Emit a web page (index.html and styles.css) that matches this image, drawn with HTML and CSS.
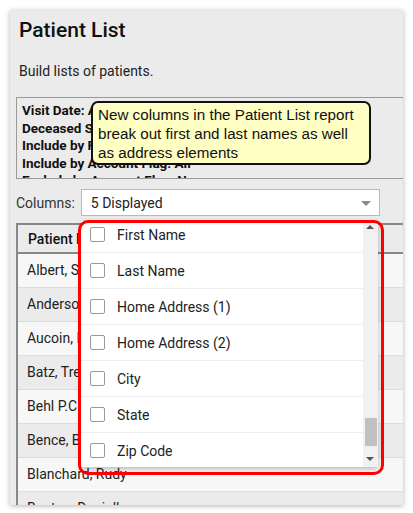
FILE: index.html
```html
<!DOCTYPE html>
<html lang="en">
<head>
  <meta charset="UTF-8">
  <meta name="viewport" content="width=device-width, initial-scale=1.0">
  <title>Patient List</title>
  <link rel="stylesheet" href="styles.css">
</head>
<body>
  <div class="panel">
    <h1>Patient List</h1>
    <p class="desc">Build lists of patients.</p>
    <div class="criteria">
      <p>Visit Date: Any</p>
      <p>Deceased Status: All</p>
      <p>Include by Payer: All</p>
      <p>Include by Account Flag: All</p>
      <p>Exclude by Account Flag: None</p>
    </div>
    <div class="tip">New columns in the Patient List report break out first and last names as well as address elements</div>
    <div class="columns">
      <label>Columns:</label>
      <div class="select">
        <span>5 Displayed</span>
        <span class="caret"></span>
      </div>
      <div class="dropdown">
        <ul class="options">
          <li><span class="box"></span>First Name</li>
          <li><span class="box"></span>Last Name</li>
          <li><span class="box"></span>Home Address (1)</li>
          <li><span class="box"></span>Home Address (2)</li>
          <li><span class="box"></span>City</li>
          <li><span class="box"></span>State</li>
          <li><span class="box"></span>Zip Code</li>
        </ul>
        <div class="scrollbar">
          <span class="arrow up"></span>
          <span class="thumb"></span>
          <span class="arrow down"></span>
        </div>
      </div>
      <div class="highlight"></div>
    </div>
    <table class="patients">
      <thead>
        <tr><th>Patient Name</th></tr>
      </thead>
      <tbody>
        <tr><td>Albert, Sarah</td></tr>
        <tr><td>Anderson, Mark</td></tr>
        <tr><td>Aucoin, Bill</td></tr>
        <tr><td>Batz, Trevor</td></tr>
        <tr><td>Behl P.C.</td></tr>
        <tr><td>Bence, Brian</td></tr>
        <tr><td>Blanchard, Rudy</td></tr>
        <tr><td>Benton, Danielle</td></tr>
      </tbody>
    </table>
  </div>
</body>
</html>
```

FILE: styles.css
```css
* {
  padding: 0;
  margin: 0;
  box-sizing: border-box;
}
body {
  background-color: #fff;
  font-family: Roboto, "Liberation Sans", sans-serif;
  color: #222;
}
.panel {
  position: relative;
  margin: 10px;
  width: 393px;
  height: 495px;
  padding-left: 6px;
  background-color: #ebebeb;
  box-shadow: 0 1px 5px rgba(0, 0, 0, 0.3);
  overflow: hidden;
}
h1 {
  padding: 8px 0 0 3px;
  font-size: 21px;
  font-weight: 500;
  line-height: 24px;
  color: #111;
}
.desc {
  margin-top: 19px;
  padding-left: 3px;
  font-size: 14px;
  line-height: 20px;
}
.criteria {
  margin-top: 16px;
  width: 420px;
  height: 82px;
  padding: 4px 5px;
  border: 1px solid #999;
  overflow: hidden;
}
.criteria p {
  font-size: 13.5px;
  font-weight: 700;
  line-height: 17.5px;
  color: #111;
  white-space: nowrap;
}
.tip {
  position: absolute;
  left: 81px;
  top: 91px;
  width: 280px;
  padding: 2px 4px 1px 5px;
  border: 2px solid #111;
  border-radius: 7px;
  background-color: #ffffc4;
  font-family: "Liberation Sans", Arial, sans-serif;
  font-size: 15.2px;
  line-height: 19px;
  color: #111;
  z-index: 4;
}
.columns {
  position: relative;
  display: flex;
  align-items: center;
  gap: 6px;
  margin-top: 10px;
}
.columns label {
  font-size: 14px;
  color: #333;
}
.select {
  display: flex;
  align-items: center;
  justify-content: space-between;
  width: 299px;
  height: 27px;
  padding: 0 8px 0 9px;
  border: 1px solid #a4bde4;
  background-color: #fff;
  font-size: 14px;
}
.caret {
  width: 0;
  height: 0;
  border-left: 5px solid transparent;
  border-right: 5px solid transparent;
  border-top: 5px solid #888;
  margin-top: 2px;
}
.dropdown {
  position: absolute;
  left: 65px;
  top: 32px;
  width: 297px;
  height: 246px;
  display: flex;
  background-color: #fff;
  box-shadow: 0 2px 5px rgba(0, 0, 0, 0.25);
  overflow: hidden;
  z-index: 2;
}
.options {
  flex: 1;
  list-style: none;
  margin-top: -4px;
}
.options li {
  display: flex;
  align-items: center;
  gap: 12px;
  height: 36px;
  padding-left: 9px;
  border-bottom: 1px solid #eee;
  font-size: 14px;
  color: #222;
}
.box {
  width: 15px;
  height: 15px;
  border: 1px solid #999;
  border-radius: 2px;
}
.scrollbar {
  position: relative;
  width: 15px;
  background-color: #f1f1f1;
}
.arrow {
  position: absolute;
  left: 3px;
  width: 0;
  height: 0;
  border-left: 4px solid transparent;
  border-right: 4px solid transparent;
}
.arrow.up {
  top: 4px;
  border-bottom: 4px solid #555;
}
.arrow.down {
  bottom: 6px;
  border-top: 4px solid #555;
}
.thumb {
  position: absolute;
  left: 2px;
  right: 1px;
  top: 197px;
  height: 28px;
  background-color: #c1c1c1;
}
.highlight {
  position: absolute;
  left: 62px;
  top: 31px;
  width: 306px;
  height: 255px;
  border: 3px solid #f00;
  border-radius: 10px;
  z-index: 3;
}
.patients {
  margin-top: 7px;
  width: 420px;
  border-collapse: collapse;
  border-left: 2px solid #888;
  font-size: 14px;
}
.patients th {
  height: 29px;
  padding-left: 10px;
  text-align: left;
  font-weight: 500;
  color: #111;
  background-color: #ebebeb;
  border-top: 2px solid #888;
  border-bottom: 2px solid #888;
}
.patients td {
  height: 34px;
  padding-left: 9px;
  border-bottom: 1px solid #ddd;
  color: #222;
}
.patients tbody tr:nth-child(odd) {
  background-color: #f7f7f7;
}
.patients tbody tr:nth-child(even) {
  background-color: #ebebeb;
}
```
